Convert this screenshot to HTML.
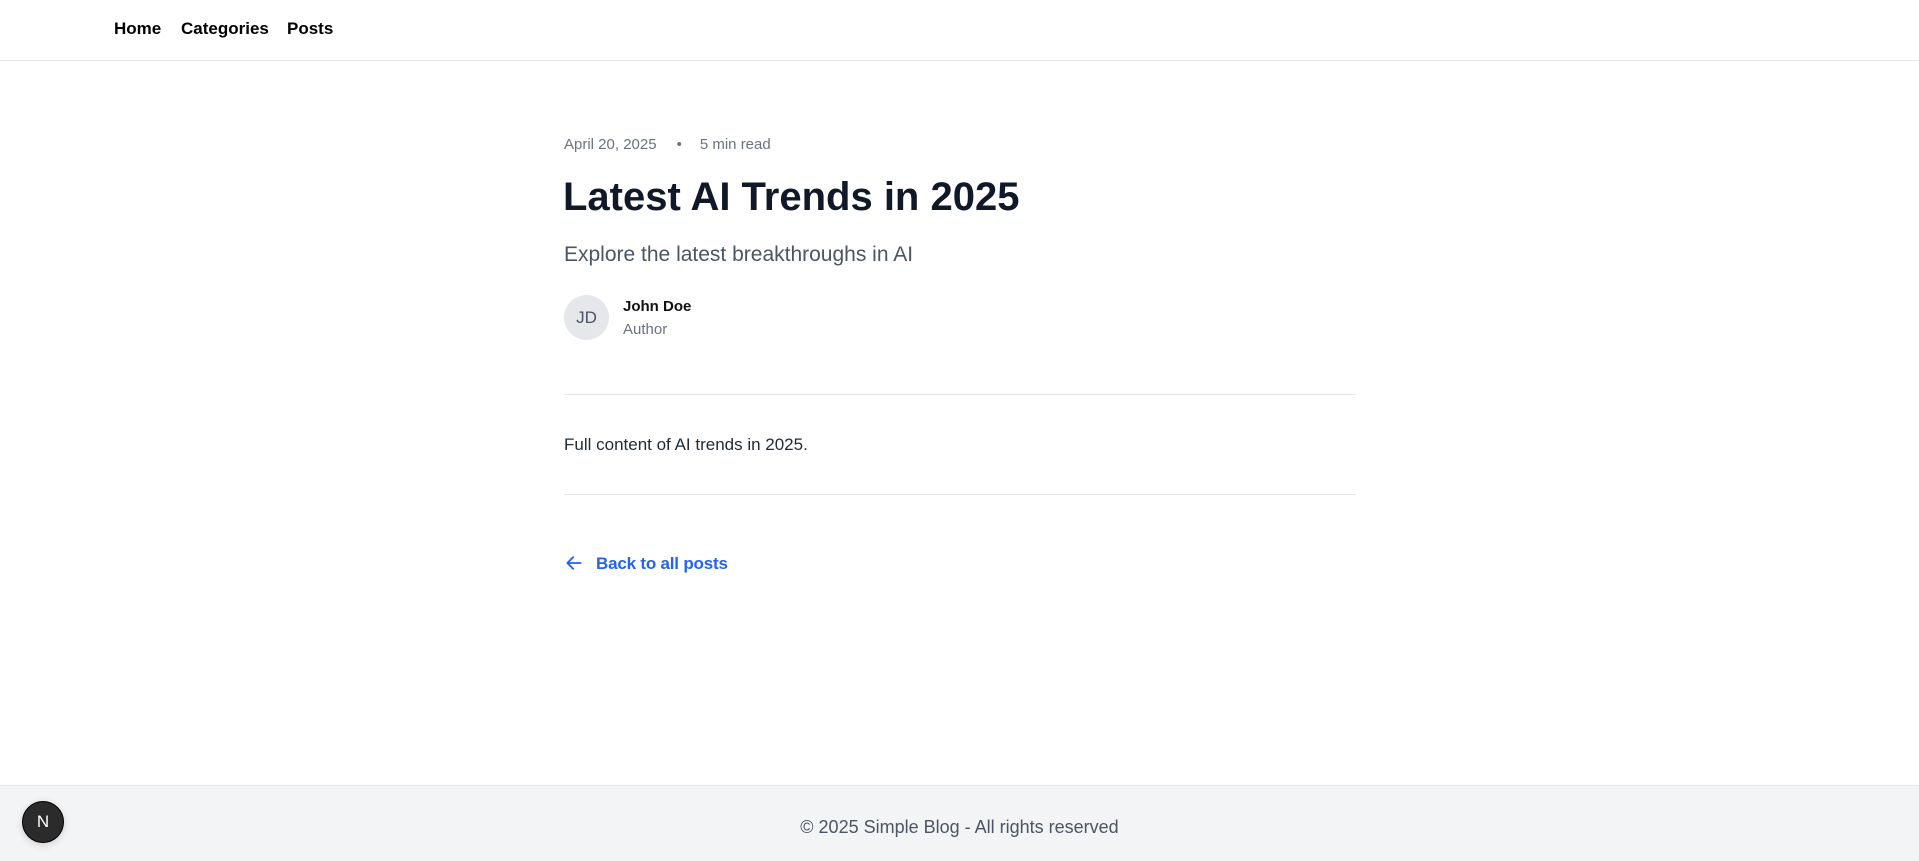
<!DOCTYPE html>
<html><head><meta charset="utf-8"><style>
*{margin:0;padding:0;box-sizing:border-box}
body{width:1919px;height:861px;position:relative;background:#fff;font-family:"Liberation Sans",sans-serif;overflow:hidden}
.nav{position:absolute;left:0;top:0;width:100%;height:61px;border-bottom:1px solid #e5e7eb}
.nav a{position:absolute;top:19px;font-size:17px;color:#000;font-weight:600;text-decoration:none}
.abs{position:absolute;white-space:nowrap}
.hr{position:absolute;left:564px;width:792px;height:1px;background:#e5e7eb}
.footer{position:absolute;left:0;top:785px;width:100%;height:76px;background:#f3f4f6;border-top:1px solid #e5e7eb}
</style></head><body>
<div class="nav">
<a style="left:114px">Home</a>
<a style="left:181px">Categories</a>
<a style="left:287px">Posts</a>
</div>
<div class="abs" style="left:564px;top:136px;font-size:15px;color:#6b7280">April 20, 2025<span style="margin:0 18px 0 20px">•</span>5 min read</div>
<div class="abs" style="left:563px;top:175px;font-size:40px;font-weight:700;color:#111827">Latest AI Trends in 2025</div>
<div class="abs" style="left:564px;top:243px;font-size:21px;color:#4b5563">Explore the latest breakthroughs in AI</div>
<div class="abs" style="left:564px;top:295px;width:45px;height:45px;border-radius:50%;background:#e5e7eb;color:#4b5563;font-size:17px;font-weight:500;text-align:center;line-height:45px">JD</div>
<div class="abs" style="left:623px;top:298px;font-size:15px;font-weight:600;color:#111">John Doe</div>
<div class="abs" style="left:623px;top:321px;font-size:15px;color:#6b7280">Author</div>
<div class="hr" style="top:394px"></div>
<div class="abs" style="left:564px;top:435px;font-size:17px;color:#1f2937">Full content of AI trends in 2025.</div>
<div class="hr" style="top:494px"></div>
<svg class="abs" style="left:564px;top:553px" width="20" height="20" viewBox="0 0 24 24" fill="none" stroke="#2563eb" stroke-width="2.2" stroke-linecap="round" stroke-linejoin="round"><path d="M20 12H4M11 5l-7 7 7 7"/></svg>
<div class="abs" style="left:596px;top:554px;font-size:17px;font-weight:600;color:#2563eb;letter-spacing:-0.2px">Back to all posts</div>
<div class="footer"><div style="text-align:center;margin-top:31px;font-size:18px;color:#4b5563">© 2025 Simple Blog - All rights reserved</div></div>
<div class="abs" style="left:22px;top:801px;width:42px;height:42px;border-radius:50%;background:#2b2b2b;border:1px solid #000;box-shadow:0 2px 8px rgba(0,0,0,.15);color:#fff;font-size:17px;text-align:center;line-height:40px">N</div>
</body></html>
